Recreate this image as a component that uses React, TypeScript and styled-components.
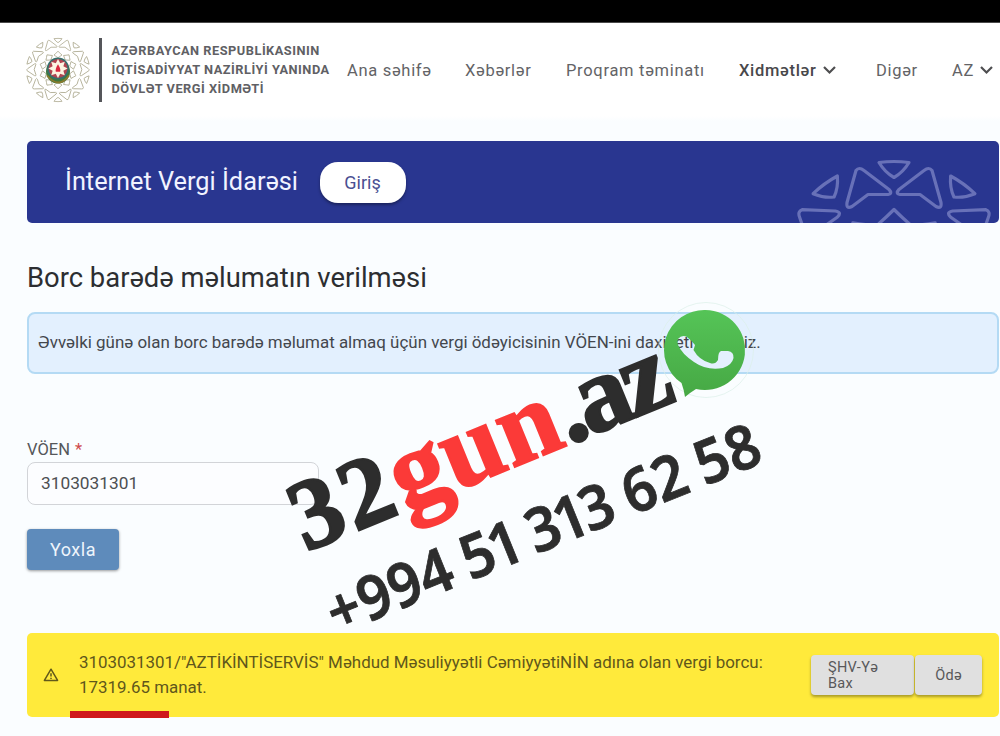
import React from 'react';
import styled, { createGlobalStyle } from 'styled-components';

const GlobalStyle = createGlobalStyle`
  * { box-sizing: border-box; }
  body {
    margin: 0;
    background: #fafdff;
    font-family: Roboto, "Liberation Sans", sans-serif;
    color: #303236;
    overflow: hidden;
  }
  button { font-family: inherit; border: 0; padding: 0; }
`;

const Page = styled.div`
  position: relative;
  width: 1000px;
  height: 736px;
  overflow: hidden;
`;

const StatusBar = styled.div`
  height: 23px;
  background: #000;
  border-bottom: 1px solid #4a4a4a;
`;

const Header = styled.header`
  display: flex;
  align-items: center;
  height: 98px;
  padding: 0 0 4px 26px;
  background: linear-gradient(#fff 95%, #fafdff);
`;

const Brand = styled.div`
  display: flex;
  align-items: center;
  width: 321px;
  flex: none;
`;

const Divider = styled.div`
  width: 2.5px;
  height: 64px;
  margin: 0 10px 0 9px;
  background: #55565a;
`;

const BrandName = styled.div`
  padding-bottom: 1px;
  font-size: 12.8px;
  line-height: 19px;
  font-weight: 700;
  letter-spacing: 0.5px;
  color: #606064;
  white-space: nowrap;
`;

const Nav = styled.nav`
  display: flex;
  align-items: center;
  white-space: nowrap;
`;

const NavItem = styled.a<{ $width: number; $active?: boolean }>`
  display: flex;
  align-items: center;
  gap: 6px;
  width: ${p => p.$width}px;
  flex: none;
  font-size: 16.5px;
  letter-spacing: 0.7px;
  font-weight: ${p => (p.$active ? 500 : 400)};
  color: ${p => (p.$active ? '#48484b' : '#636366')};
`;

const Main = styled.main`
  display: flex;
  flex-direction: column;
  padding: 20px 1px 0 27px;
`;

const Banner = styled.section`
  display: flex;
  align-items: center;
  height: 82px;
  padding-left: 38px;
  border-radius: 5px;
  background: #293690;
  overflow: hidden;
`;

const BannerTitle = styled.div`
  width: 255px;
  font-size: 25.3px;
  line-height: 30px;
  color: #f1f3ff;
  white-space: nowrap;
`;

const LoginButton = styled.button`
  width: 86px;
  height: 41px;
  padding-right: 1px;
  border-radius: 18px;
  background: #fff;
  color: #4a5092;
  font-size: 18px;
  box-shadow: 0 2px 3px rgba(0, 0, 0, 0.35);
`;

const BannerArt = styled.svg`
  width: 206px;
  height: 82px;
  margin-left: auto;
`;

const Heading = styled.h1`
  margin: 37px 0 0;
  font-size: 27.4px;
  line-height: 37px;
  font-weight: 400;
  color: #2c2e31;
`;

const Notice = styled.div`
  height: 62px;
  margin-top: 15px;
  padding: 0 9px;
  border: 2px solid #b4daf4;
  border-radius: 8px;
  background: #e3f0fe;
  font-size: 16.95px;
  line-height: 57px;
  color: #43474d;
  white-space: nowrap;
`;

const Label = styled.label`
  margin-top: 65px;
  font-size: 16.5px;
  line-height: 22px;
  color: #55575a;
  span { margin-left: 1px; color: #cf4b4b; }
`;

const Input = styled.input`
  width: 292px;
  height: 43px;
  margin-top: 1px;
  padding: 0 13px 1px;
  border: 1.5px solid #d2d4d8;
  border-radius: 8px;
  background: #fcfdff;
  font: 17.3px Roboto, sans-serif;
  color: #4d4f52;
`;

const CheckButton = styled.button`
  width: 92px;
  height: 41px;
  margin-top: 24px;
  border-radius: 4px;
  background: #5e8bbb;
  color: #eef5fc;
  font-size: 18px;
  letter-spacing: 0.5px;
  box-shadow: 0 1px 3px rgba(0, 0, 0, 0.4);
`;

const Result = styled.section`
  position: relative;
  display: flex;
  align-items: center;
  height: 84px;
  margin-top: 63px;
  padding: 0 17px 0 16px;
  border-radius: 5px;
  background: #ffea3b;
`;

const ResultText = styled.p`
  margin: 0 0 0 20px;
  width: 732px;
  flex: none;
  font-size: 16.93px;
  line-height: 25px;
  color: #5f571b;
  white-space: nowrap;
`;

const ActionButton = styled.button<{ $width: number; $inset?: number }>`
  width: ${p => p.$width}px;
  height: 40px;
  flex: none;
  padding-top: 2px;
  padding-left: ${p => p.$inset ?? 0}px;
  text-align: ${p => (p.$inset ? 'left' : 'center')};
  border-radius: 4px;
  background: #e0e0e0;
  color: #58585a;
  font-size: 14.5px;
  line-height: 16px;
  letter-spacing: 0.3px;
  box-shadow: 0 2px 3px rgba(0, 0, 0, 0.35);
  & + & { margin-left: 1px; }
`;

const RedMark = styled.div`
  position: absolute;
  left: 43px;
  top: 78px;
  width: 99px;
  height: 7px;
  background: #cf181c;
`;

const Stamp = styled.div`
  position: absolute;
  left: 306px;
  top: 466px;
  height: 100px;
  font: 700 108px/100px "Liberation Serif", serif;
  color: #2d2d2d;
  white-space: nowrap;
  transform-origin: 0 86.5px;
  transform: rotate(-22.2deg);
`;

const StampPart = styled.span<{ $size: number; $spacing?: number; $color?: string }>`
  font-size: ${p => p.$size}px;
  letter-spacing: ${p => p.$spacing ?? 0}px;
  color: ${p => p.$color ?? 'inherit'};
  -webkit-text-stroke: 2.4px ${p => p.$color ?? '#2d2d2d'};
`;

const StampPhone = styled.div`
  position: absolute;
  left: 337px;
  top: 562px;
  height: 100px;
  font: 600 61px/100px "Noto Sans", sans-serif;
  word-spacing: -2px;
  color: #2d2d2d;
  white-space: nowrap;
  -webkit-text-stroke: 0.8px #2d2d2d;
  transform-origin: 0 73.7px;
  transform: rotate(-22deg) scaleX(0.94);
`;

const NarrowDigit = styled.span`
  margin: 0 -4.5px 0 -4px;
`;

const ChatBadge = styled.svg`
  position: absolute;
  left: 651px;
  top: 295px;
  width: 110px;
  height: 110px;
`;

const Arrow = 'M-38 -109Q-35 -113 -30 -109L-5 -90Q-1 -86 -6 -85L-26 -85L-42 -73Q-48 -70 -47 -77Z';
const Tri = 'M-15 -117Q0 -119 15 -117Q9 -107 0 -102Q-9 -107 -15 -117Z';
const Kite = 'M0 -70Q8 -62 15 -56L0 -46L-15 -56Q-8 -62 0 -70Z';

function Rosette() {
  return (
    <>
      {[0, 72, 144, 216, 288].map(a => (
        <g key={a} transform={`rotate(${a})`}>
          <path d={Arrow} />
          <path d={Arrow} transform="scale(-1 1)" />
          <path d={Tri} />
          <path d={Tri} transform="rotate(36)" />
          <path d={Kite} />
          <path d={Kite} transform="rotate(36)" />
        </g>
      ))}
    </>
  );
}

function Emblem() {
  return (
    <svg width="64" height="66" viewBox="-32 -33 64 66">
      <g transform="scale(.268)" fill="none" stroke="#b3b097" strokeWidth="3.2" strokeLinejoin="round">
        <Rosette />
      </g>
      <circle cy="1.5" r="12" fill="#3f7a3c" />
      <path d="M-11 5.500Q-5 12.500 0 12.500Q6 12.500 11 5.500" fill="none" stroke="#8b7a2e" strokeWidth="1.800" />
      <circle cy="-1.5" r="11" fill="#356f6c" />
      <circle cy="-1.5" r="9.400" fill="#b04450" />
      {[0, 45, 90, 135].map(a => (
        <path key={a} transform={`translate(0 -1.5) rotate(${a})`} d="M0 -9.600L3.400 -3L3.400 3L0 9.600L-3.400 3L-3.400 -3Z" fill="#fbf5e2" />
      ))}
      <path d="M0 -5.800Q3 -1 2.200 1.800H-2.200Q-3 -1 0 -5.800Z" fill="#d9283f" />
    </svg>
  );
}

function Chevron() {
  return (
    <svg width="13" height="9" viewBox="0 0 13 9" fill="none" stroke="#4e4e50" strokeWidth="2.2">
      <path d="M1 1L6.5 6.5L12 1" />
    </svg>
  );
}

export default function App() {
  return (
    <Page>
      <GlobalStyle />
      <StatusBar />
      <Header>
        <Brand>
          <Emblem />
          <Divider />
          <BrandName>
            AZƏRBAYCAN RESPUBLİKASININ<br />
            İQTİSADİYYAT NAZİRLİYİ YANINDA<br />
            DÖVLƏT VERGİ XİDMƏTİ
          </BrandName>
        </Brand>
        <Nav>
          <NavItem $width={118}>Ana səhifə</NavItem>
          <NavItem $width={101}>Xəbərlər</NavItem>
          <NavItem $width={173}>Proqram təminatı</NavItem>
          <NavItem $width={137} $active>Xidmətlər <Chevron /></NavItem>
          <NavItem $width={76}>Digər</NavItem>
          <NavItem $width={44}>AZ <Chevron /></NavItem>
        </Nav>
      </Header>
      <Main>
        <Banner>
          <BannerTitle>İnternet Vergi İdarəsi</BannerTitle>
          <LoginButton>Giriş</LoginButton>
          <BannerArt viewBox="793 141 206 82">
            <g transform="translate(894 279.5)" fill="none" stroke="#6871b8" strokeWidth="3.2" strokeLinejoin="round">
              <Rosette />
            </g>
          </BannerArt>
        </Banner>
        <Heading>Borc barədə məlumatın verilməsi</Heading>
        <Notice>Əvvəlki günə olan borc barədə məlumat almaq üçün vergi ödəyicisinin VÖEN-ini daxil etməlisiniz.</Notice>
        <Label>VÖEN <span>*</span></Label>
        <Input defaultValue="3103031301" />
        <CheckButton>Yoxla</CheckButton>
        <Result>
          <svg width="16" height="14" viewBox="0 0 16 14" fill="none" stroke="#62591a" strokeWidth="1.5" strokeLinejoin="round">
            <path d="M8 1.2L14.6 12.4H1.4Z" />
            <path d="M8 5.2V8.4M8 9.8V11" />
          </svg>
          <ResultText>
            3103031301/"AZTİKİNTİSERVİS" Məhdud Məsuliyyətli CəmiyyətiNİN adına olan vergi borcu:<br />
            17319.65 manat.
          </ResultText>
          <ActionButton $width={103} $inset={17}>ŞHV-Yə<br />Bax</ActionButton>
          <ActionButton $width={67}>Ödə</ActionButton>
          <RedMark />
        </Result>
      </Main>
      <Stamp>
        <StampPart $size={100} $spacing={3.5}>32</StampPart>
        <StampPart $size={108} $spacing={1} $color="#fb3a38">gun</StampPart>
        <StampPart $size={108} $spacing={-5}>.az</StampPart>
      </Stamp>
      <StampPhone>
        +994 5<NarrowDigit>1</NarrowDigit> 3<NarrowDigit>1</NarrowDigit>3 62 58
      </StampPhone>
      <ChatBadge viewBox="650 295 110 110">
        <defs>
          <linearGradient id="leaf" x1="0" y1="0" x2="0" y2="1">
            <stop offset="0" stopColor="#55c457" />
            <stop offset="1" stopColor="#46a844" />
          </linearGradient>
          <mask id="handset">
            <rect x="650" y="295" width="110" height="110" fill="#fff" />
            <path d="M677 339Q681 334 686 337Q691 341 694 345L692.500 350Q698 360 709 363Q714 365 717 360Q717 352 720 351H727Q733 352 732.500 358Q731 365 722 368Q706 371 693 362Q681 354 677 345Q676 341 677 339Z" fill="#000" />
          </mask>
        </defs>
        <circle cx="705" cy="350" r="47.500" fill="none" stroke="#dcefe8" strokeOpacity=".7" />
        <path mask="url(#handset)" fill="url(#leaf)" d="M704.500 310A40.200 40 0 1 1 695 389Q690 392 684 397Q683 390 680.500 383A40.200 40 0 0 1 704.500 310Z" />
      </ChatBadge>
    </Page>
  );
}
